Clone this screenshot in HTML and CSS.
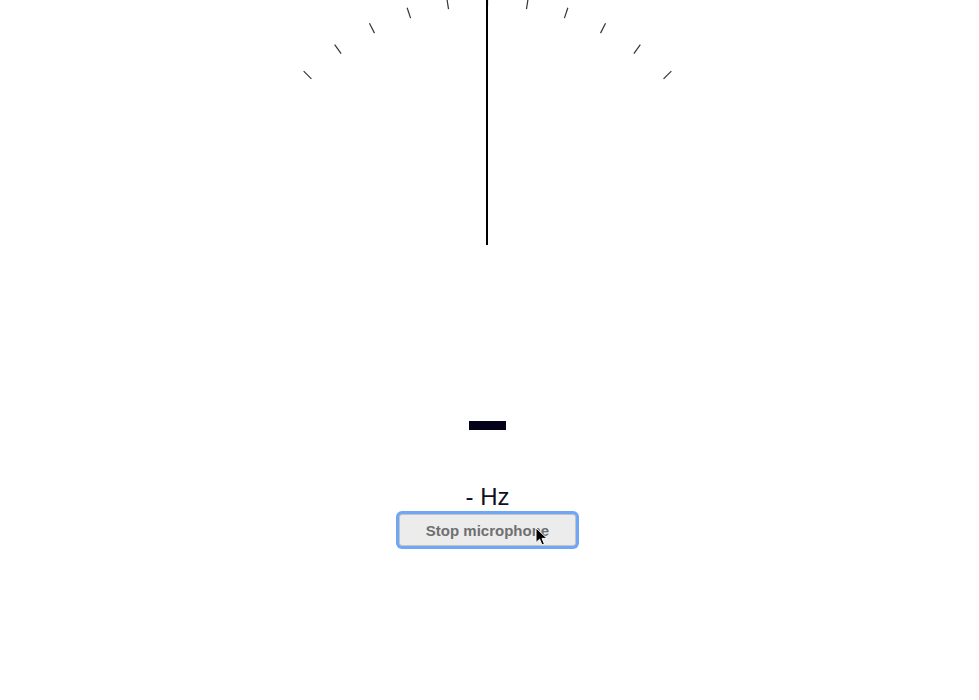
FILE: index.html
```html
<!DOCTYPE html>
<html>
<head>
<meta charset="utf-8">
<link rel="stylesheet" href="styles.css">
</head>
<body>
<main class="tuner">
  <svg class="gauge" width="979" height="250" viewBox="0 0 979 250">
    <g stroke="#333" stroke-width="1.2" stroke-linecap="butt">
      <g transform="translate(487.5 255)">
        <line x1="0" y1="-249" x2="0" y2="-260" transform="rotate(-45)"/>
        <line x1="0" y1="-249" x2="0" y2="-260" transform="rotate(-36)"/>
        <line x1="0" y1="-249" x2="0" y2="-260" transform="rotate(-27)"/>
        <line x1="0" y1="-249" x2="0" y2="-260" transform="rotate(-18)"/>
        <line x1="0" y1="-249" x2="0" y2="-260" transform="rotate(-9)"/>
        <line x1="0" y1="-249" x2="0" y2="-260" transform="rotate(0)"/>
        <line x1="0" y1="-249" x2="0" y2="-260" transform="rotate(9)"/>
        <line x1="0" y1="-249" x2="0" y2="-260" transform="rotate(18)"/>
        <line x1="0" y1="-249" x2="0" y2="-260" transform="rotate(27)"/>
        <line x1="0" y1="-249" x2="0" y2="-260" transform="rotate(36)"/>
        <line x1="0" y1="-249" x2="0" y2="-260" transform="rotate(45)"/>
      </g>
    </g>
    <rect x="486" y="0" width="2" height="245" fill="#000"/>
  </svg>
  <section class="readout">
    <div class="note"></div>
    <div class="freq">- Hz</div>
    <button class="mic-btn">Stop microphone</button>
  </section>
</main>
<svg class="cursor" width="14" height="20" viewBox="0 0 14 20">
  <path d="M1 1 L1 15.5 L4.6 12.2 L7 18 L9.4 17 L7.1 11.4 L12 11.4 Z" fill="#000" stroke="#fff" stroke-width="1" stroke-linejoin="round"/>
</svg>
</body>
</html>
```

FILE: styles.css
```css
html, body {
  margin: 0;
  padding: 0;
  background: #fff;
}
body {
  font-family: "Liberation Sans", Arial, sans-serif;
  position: relative;
  width: 979px;
  height: 700px;
  overflow: hidden;
}
.tuner {
  display: flex;
  flex-direction: column;
}
.gauge {
  display: block;
}
.readout {
  width: 975px;
  display: flex;
  flex-direction: column;
  align-items: center;
}
.note {
  width: 37px;
  height: 9px;
  margin-top: 171px;
  margin-right: 1px;
  background: #03001a;
}
.freq {
  margin-top: 54px;
  height: 26px;
  line-height: 26px;
  font-size: 24px;
  color: #10101f;
}
.mic-btn {
  margin-top: 4px;
  width: 177px;
  height: 32px;
  box-sizing: border-box;
  border: 1px solid #c4c4c4;
  border-radius: 3px;
  background: #ececec;
  box-shadow: 0 0 0 3px #6fa6f6;
  font-family: "Liberation Sans", Arial, sans-serif;
  font-weight: bold;
  font-size: 15px;
  color: #6f6f6f;
  padding: 0;
}
.cursor {
  position: absolute;
  left: 535px;
  top: 527px;
}
```
